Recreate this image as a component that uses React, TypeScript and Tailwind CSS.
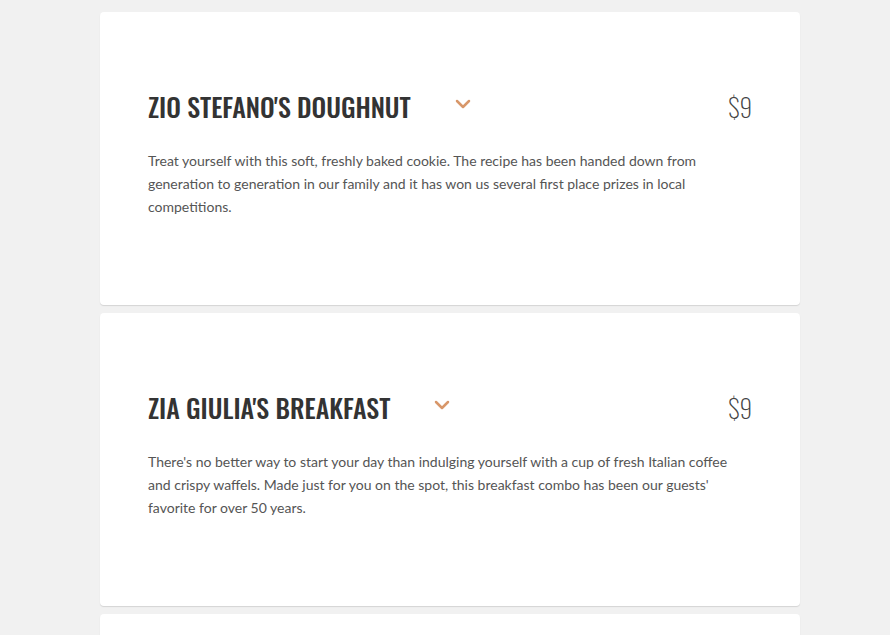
import React from 'react'

interface MenuItem {
  name: string
  price: string
  text: string
}

const items: MenuItem[] = [
  {
    name: "ZIO STEFANO'S DOUGHNUT",
    price: '$9',
    text: 'Treat yourself with this soft, freshly baked cookie. The recipe has been handed down from generation to generation in our family and it has won us several first place prizes in local competitions.',
  },
  {
    name: "ZIA GIULIA'S BREAKFAST",
    price: '$9',
    text: "There's no better way to start your day than indulging yourself with a cup of fresh Italian coffee and crispy waffels. Made just for you on the spot, this breakfast combo has been our guests' favorite for over 50 years.",
  },
]

const Chevron = () => (
  <svg width="16" height="10" viewBox="0 0 16 10" className="text-[#d8976a]">
    <path d="M2 2 L8 8 L14 2" fill="none" stroke="currentColor" strokeWidth="2.5" strokeLinecap="round" strokeLinejoin="round" />
  </svg>
)

function Card({ item }: { item: MenuItem }) {
  return (
    <div className="bg-white rounded shadow-[0_1px_1px_rgba(0,0,0,0.12)] h-[293px] shrink-0 px-12 pt-[78px]">
      <div className="flex items-center">
        <h2 className="text-[26px] leading-[34px] font-medium text-[#333] font-['Oswald','Liberation_Sans_Narrow',sans-serif]">
          {item.name}
        </h2>
        <div className="ml-11 mt-[-6px]">
          <Chevron />
        </div>
        <div className="ml-auto text-[25px] leading-[34px] font-extralight text-[#444] font-['Oswald','Liberation_Sans_Narrow',sans-serif]">
          {item.price}
        </div>
      </div>
      <p className="mt-[25px] text-[14px] leading-[23px] text-[#555] font-['Lato',sans-serif]">
        {item.text}
      </p>
    </div>
  )
}

export default function App() {
  return (
    <div className="h-screen overflow-hidden bg-[#f1f1f1] pt-3">
      <div className="w-[700px] ml-[100px] flex flex-col gap-2">
        {items.map((item, i) => (
          <Card key={i} item={item} />
        ))}
        <div className="bg-white rounded shadow-[0_1px_1px_rgba(0,0,0,0.12)] h-[293px] shrink-0" />
      </div>
    </div>
  )
}
